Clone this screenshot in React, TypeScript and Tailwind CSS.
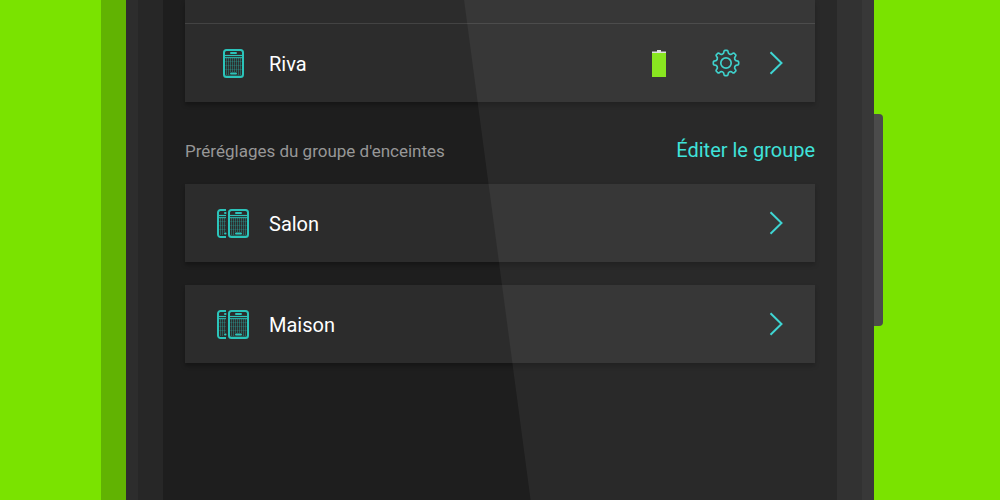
import type { ReactNode } from "react";

type Preset = {
  id: number;
  name: string;
};

const presets: Preset[] = [
  { id: 1, name: "Salon" },
  { id: 2, name: "Maison" },
];

function point(radius: number, degrees: number) {
  const angle = ((degrees - 90) * Math.PI) / 180;
  return `${(14 + radius * Math.cos(angle)).toFixed(2)} ${(14 + radius * Math.sin(angle)).toFixed(2)}`;
}

// eight rounded teeth with scooped valleys between them
const gearPath =
  [0, 45, 90, 135, 180, 225, 270, 315]
    .map((tooth, index) =>
      [
        `${index === 0 ? "M" : "L"}${point(11.2, tooth - 11)}`,
        `Q${point(12.7, tooth - 9)} ${point(12.7, tooth - 5)}`,
        `L${point(12.7, tooth + 5)}`,
        `Q${point(12.7, tooth + 9)} ${point(11.2, tooth + 11)}`,
        `C${point(9.2, tooth + 13)} ${point(9.2, tooth + 32)} ${point(11.2, tooth + 34)}`,
      ].join(""),
    )
    .join("") + "Z";

function SpeakerBody() {
  return (
    <>
      <rect x="1" y="1" width="19" height="27" rx="2.5" strokeWidth="2" />
      <path d="M8 4h5M8 24.500h5" strokeWidth="2" strokeLinecap="round" />
      <path d="M1 6.500h19" strokeWidth="1.2" />
      <path d="M1 8.700h19" strokeWidth="1" />
      <path
        d="M3.500 9v17M5.500 9v17M7.500 9v14M9.500 9v14M11.500 9v14M13.500 9v14M15.500 9v17M17.500 9v17"
        strokeWidth="0.8"
        opacity="0.45"
      />
      <path d="M2 12.500h17M2 16.500h17M2 20.500h17" strokeWidth="0.8" opacity="0.25" />
      <path d="M2 26.300h17" strokeWidth="0.6" opacity="0.6" />
    </>
  );
}

function SpeakerIcon() {
  return (
    <svg width="21" height="29" viewBox="0 0 21 29" fill="none" stroke="#2bc4ba" aria-hidden="true">
      <SpeakerBody />
    </svg>
  );
}

function SpeakerGroupIcon() {
  return (
    <svg width="32" height="29" viewBox="0 0 32 29" fill="none" stroke="#2bc4ba" aria-hidden="true">
      <path d="M9 1H3.500A2.500 2.500 0 0 0 1 3.500v22A2.500 2.500 0 0 0 3.500 28H9" strokeWidth="2" />
      <path d="M8 4h.5M8 24.500h.5" strokeWidth="2" strokeLinecap="round" />
      <path d="M1 6.500h8" strokeWidth="1.2" />
      <path d="M1 8.700h8" strokeWidth="1" />
      <path d="M3.500 9v17M5.500 9v17M7.500 9v14" strokeWidth="0.8" opacity="0.45" />
      <path d="M2 12.500h7M2 16.500h7M2 20.500h7" strokeWidth="0.8" opacity="0.25" />
      <g transform="translate(11 0)">
        <SpeakerBody />
      </g>
    </svg>
  );
}

function BatteryIcon() {
  return (
    <svg width="14" height="27" viewBox="0 0 14 27" role="img" aria-label="Batterie pleine">
      <path d="M5 0h4v1.500h5V4H0V1.500h5z" fill="#dcdcdc" />
      <path d="M0 3h14v24H0z" fill="#83e514" />
    </svg>
  );
}

function GearIcon() {
  return (
    <svg
      width="28"
      height="28"
      viewBox="0 0 28 28"
      fill="none"
      stroke="#35cfc9"
      strokeWidth="1.7"
      strokeLinejoin="round"
      aria-hidden="true"
    >
      <path d={gearPath} />
      <circle cx="14" cy="14" r="5.2" />
    </svg>
  );
}

function ChevronIcon() {
  return (
    <svg width="14" height="24" viewBox="0 0 14 24" fill="none" stroke="#35d3d0" strokeWidth="2" aria-hidden="true">
      <path d="M1.500 1.200 12.500 12 1.500 22.800" />
    </svg>
  );
}

function SpeakerRow({ icon, name, children }: { icon: ReactNode; name: string; children?: ReactNode }) {
  return (
    <div className="flex h-[78px] items-center px-8">
      <div className="flex w-8 justify-center">{icon}</div>
      <div className="ml-5 flex-1 pt-0.5 text-[20px] leading-6 text-white">{name}</div>
      {children}
      <button type="button" aria-label={`Ouvrir ${name}`}>
        <ChevronIcon />
      </button>
    </div>
  );
}

export default function App() {
  return (
    <div className="flex min-h-screen bg-[#7ae300] pr-[126px] pl-[101px] font-[Roboto,sans-serif]">
      <div className="w-[25px] shrink-0 bg-[#61b302]" />

      <div className="relative flex flex-1">
        <div className="flex flex-1 border-x-[12px] border-[#2d2d2d]">
          <main className="flex-1 border-x-[25px] border-[#272727] bg-[#1e1e1e] px-[22px]">
            <section className="bg-[#2c2c2c] shadow-[0_3px_4px_rgba(0,0,0,0.3)]">
              <div className="h-6 border-b border-[#434343]" />
              <SpeakerRow icon={<SpeakerIcon />} name="Riva">
                <BatteryIcon />
                <button type="button" aria-label="Réglages" className="mr-[29px] ml-[46px]">
                  <GearIcon />
                </button>
              </SpeakerRow>
            </section>

            <div className="flex h-[82px] items-center justify-between pt-3.5">
              <h2 className="pt-0.5 text-[17px] leading-6 text-[#979797]">Préréglages du groupe d'enceintes</h2>
              <a href="#groupe" className="text-[20px] leading-6 text-[#35e0d8]">
                Éditer le groupe
              </a>
            </div>

            <ul className="space-y-[23px]">
              {presets.map((preset) => (
                <li key={preset.id} className="bg-[#2c2c2c] shadow-[0_3px_4px_rgba(0,0,0,0.3)]">
                  <SpeakerRow icon={<SpeakerGroupIcon />} name={preset.name} />
                </li>
              ))}
            </ul>
          </main>
        </div>

        {/* glass reflection */}
        <div className="pointer-events-none absolute inset-0 bg-white/5 [clip-path:polygon(45.2%_0,100%_0,100%_100%,54.1%_100%)]" />
        {/* power key */}
        <div className="absolute top-[114px] left-full h-[212px] w-[9px] rounded-r bg-[#4b4b4b]" />
      </div>
    </div>
  );
}
